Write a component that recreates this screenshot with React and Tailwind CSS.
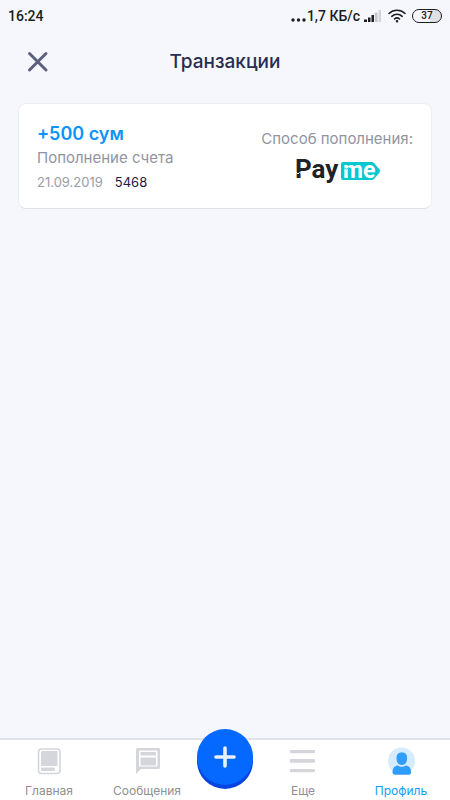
import React from "react";

function StatusBar() {
  return (
    <div className="flex h-8 items-center justify-between px-2 font-[Roboto,sans-serif] text-sm font-medium text-[#1c1d20]">
      <span>16:24</span>
      <div className="flex items-center">
        <svg className="mt-2 h-1 w-4" viewBox="0 0 16 4" fill="currentColor" aria-hidden="true">
          <circle cx="2" cy="2" r="1.7" />
          <circle cx="7.500" cy="2" r="1.7" />
          <circle cx="13" cy="2" r="1.7" />
        </svg>
        <span>1,7 КБ/с</span>
        <svg className="ml-1 h-3 w-[18px]" viewBox="0 0 18 12" fill="currentColor" aria-hidden="true">
          <rect x="0" y="9.500" width="3" height="2.500" />
          <rect x="4" y="7.500" width="2.500" height="4.500" />
          <rect x="7.500" y="5" width="2.500" height="7" />
          <rect x="11" y="2.500" width="2.500" height="9.500" fill="#c4c6ca" />
          <rect x="14.500" y="0" width="2.500" height="12" fill="#d3d4d8" />
        </svg>
        <svg
          className="ml-[6px] h-[14px] w-[18px]"
          viewBox="0 0 18 14"
          fill="none"
          stroke="currentColor"
          strokeWidth="1.6"
          strokeLinecap="round"
          aria-hidden="true"
        >
          <path d="M1 4.500a11.500 11.500 0 0 1 16 0" />
          <path d="M3.800 7.300a7.500 7.500 0 0 1 10.400 0" />
          <path d="M6.500 10a3.700 3.700 0 0 1 5 0" />
          <circle cx="9" cy="12.200" r="0.500" fill="currentColor" />
        </svg>
        <span className="ml-[6px] flex h-[14px] w-[30px] items-center justify-center rounded-full border border-[#1c1d20] bg-linear-to-r from-transparent from-60% to-[#dfe0e4] to-60% text-[10px]">
          37
        </span>
      </div>
    </div>
  );
}

function PaymeLogo() {
  return (
    <svg className="h-8 w-[88px]" viewBox="-1 0 88 32" role="img" aria-label="Payme">
      <text x="1" y="23" fill="#222" className="font-[Roboto,sans-serif] text-[26px] font-bold">
        Pay
      </text>
      <path d="M2 17l2 2 1.500-1.500 2 1" fill="none" stroke="#fff" strokeWidth="0.900" />
      <path d="M49 7h28.500q1.500 0 2.500 1l5.500 6.500q1 1.500 0 3L80 24q-1 1-2.500 1H49q-2 0-2-2V9q0-2 2-2z" fill="#06c8d0" />
      <text x="49" y="23" fill="#fff" className="font-[Roboto,sans-serif] text-[23px] font-bold">
        me
      </text>
      <path d="M48 14l3-1 1 1.500 3-2" fill="none" stroke="#06c8d0" strokeWidth="0.800" />
    </svg>
  );
}

function TransactionCard({ amount, title, date, number }) {
  return (
    <article className="flex items-center justify-between rounded-lg border border-[#eceff3] border-b-[#dfe3e6] bg-white px-[18px] pt-[18px] pb-[14px]">
      <div>
        <p className="text-lg leading-6 font-semibold text-[#0c93fa]">{amount}</p>
        <p className="text-[15px] leading-6 text-[#91949f]">{title}</p>
        <p className="flex gap-3 text-[13px] leading-6">
          <span className="text-[#9a9ca6]">{date}</span>
          <span className="text-[#1b2145]">{number}</span>
        </p>
      </div>
      <div className="flex flex-col items-center gap-[6px]">
        <p className="text-[15px] leading-5 text-[#91949f]">Способ пополнения:</p>
        <PaymeLogo />
      </div>
    </article>
  );
}

function HomeIcon() {
  return (
    <svg className="h-7 w-7" viewBox="0 0 28 28" aria-hidden="true">
      <rect x="3.500" y="2" width="21.500" height="24.500" rx="3" fill="#fff" stroke="#d5d6dc" strokeWidth="1.6" />
      <rect x="6" y="4" width="16.500" height="15" rx="1" fill="#d5d6dc" />
      <rect x="6" y="20.500" width="14" height="3.500" rx="1" fill="#d5d6dc" />
    </svg>
  );
}

function MessagesIcon() {
  return (
    <svg className="h-7 w-7" viewBox="0 0 28 28" aria-hidden="true">
      <path d="M5 1h20.500A1.500 1.500 0 0 1 27 2.500v18a1.500 1.500 0 0 1-1.500 1.500H8l-5 5V3a2 2 0 0 1 2-2z" fill="#d5d6dc" />
      <rect x="6" y="3.500" width="18.500" height="16" rx="1" fill="#fff" />
      <rect x="7.500" y="5" width="15.500" height="3.500" rx="0.500" fill="#d5d6dc" />
      <rect x="7.500" y="10.500" width="15.500" height="8" rx="0.500" fill="#d5d6dc" />
    </svg>
  );
}

function MoreIcon() {
  return (
    <svg className="h-7 w-7" viewBox="0 0 28 28" fill="#d5d5dc" aria-hidden="true">
      <rect x="1" y="3" width="25" height="3.200" rx="1" />
      <rect x="1" y="12" width="25" height="3.800" rx="1" />
      <rect x="1" y="22" width="25" height="3.200" rx="1" />
    </svg>
  );
}

function ProfileIcon() {
  return (
    <svg className="h-7 w-7" viewBox="0 0 28 28" aria-hidden="true">
      <circle cx="14.500" cy="14" r="13.500" fill="#d5ebfe" />
      <path d="M9.500 11c0-3.800 2-5.500 5.300-5.500s5.300 1.700 5.300 5.500c0 4.500-2 7-5.300 7s-5.300-2.500-5.300-7z" fill="#2f9efb" />
      <path d="M5.500 25.500c0-4.200 1.800-6.700 5.300-7 1.200.9 2.500 1.300 4 1.300s2.800-.4 4-1.300c3.500.3 5.300 2.800 5.300 7q0 2-2 2.200H7.500q-2-.2-2-2.200z" fill="#2f9efb" />
    </svg>
  );
}

function NavItem({ icon, label, active }) {
  return (
    <a
      href="#"
      aria-current={active ? "page" : undefined}
      className={`flex min-w-0 flex-1 flex-col items-center gap-2 pt-[7px] text-xs leading-4 ${
        active ? "text-[#159bf3]" : "text-[#8e8f93]"
      }`}
    >
      {icon}
      <span>{label}</span>
    </a>
  );
}

function App() {
  return (
    <div className="flex min-h-screen flex-col bg-[#f5f7fc] font-[Inter,sans-serif]">
      <StatusBar />

      <header className="grid grid-cols-[1fr_auto_1fr] items-center px-[26px] py-4">
        <button type="button" aria-label="Закрыть" className="justify-self-start text-[#5b617b]">
          <svg className="h-6 w-6" viewBox="0 0 24 24" fill="none" stroke="currentColor" strokeWidth="3" strokeLinecap="round">
            <path d="M3.500 3.500l16.500 16.500M20 3.500L3.500 20" />
          </svg>
        </button>
        <h1 className="text-[19px] leading-7 font-medium text-[#272e50]">Транзакции</h1>
      </header>

      <main className="flex-1 px-[18px] pt-[11px]">
        <TransactionCard amount="+500 сум" title="Пополнение счета" date="21.09.2019" number="5468" />
      </main>

      <nav className="flex h-[62px] border-t-2 border-[#e1e3e8] bg-white">
        <NavItem icon={<HomeIcon />} label="Главная" />
        <NavItem icon={<MessagesIcon />} label="Сообщения" />
        <button
          type="button"
          aria-label="Добавить"
          className="mx-px -mt-[11px] flex h-14 w-14 items-center justify-center rounded-full bg-[#0569ff] shadow-[0_4px_0_#0844df]"
        >
          <svg className="h-6 w-6" viewBox="0 0 24 24" fill="none" stroke="#e9f1ff" strokeWidth="3.600" strokeLinecap="round">
            <path d="M12 3v18M3 12h18" />
          </svg>
        </button>
        <NavItem icon={<MoreIcon />} label="Еще" />
        <NavItem icon={<ProfileIcon />} label="Профиль" active />
      </nav>
    </div>
  );
}

export default App;
